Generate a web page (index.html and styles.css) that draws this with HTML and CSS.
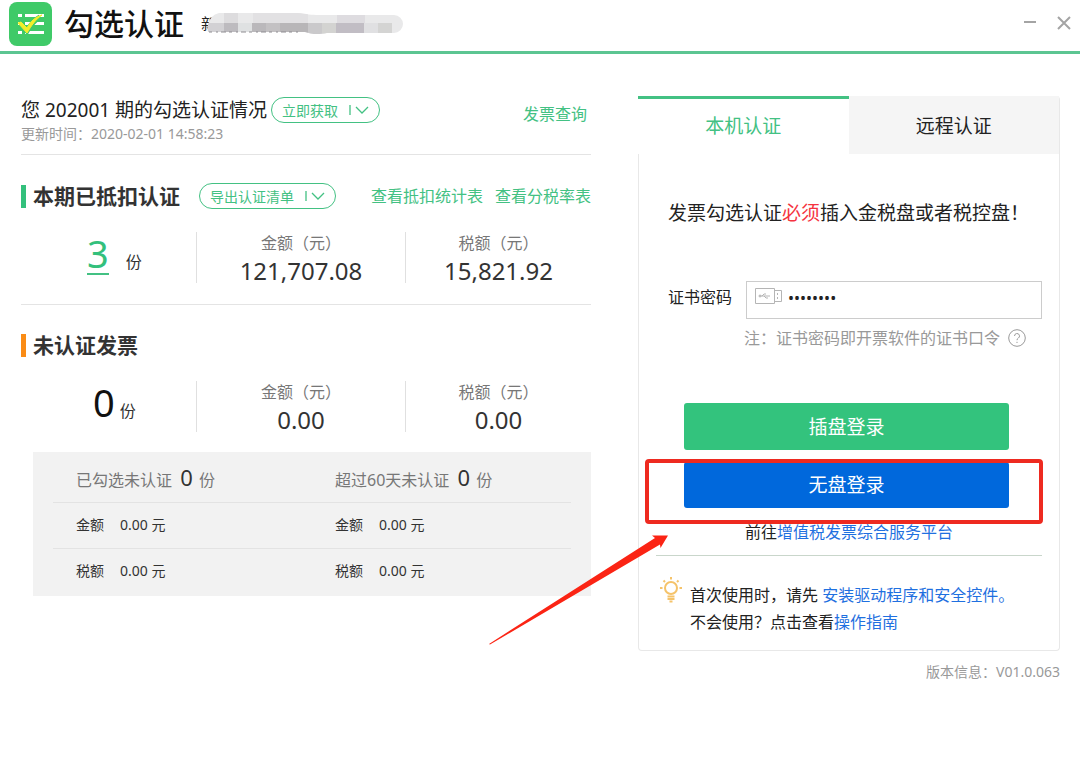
FILE: index.html
```html
<!DOCTYPE html>
<html lang="zh-CN">
<head>
<meta charset="utf-8">
<title>勾选认证</title>
<link rel="stylesheet" href="styles.css">
</head>
<body>
<header class="titlebar">
  <svg class="logo" viewBox="0 0 43 44" aria-hidden="true">
    <rect width="43" height="44" rx="8" fill="#3fca68"/>
    <g fill="#fff">
      <rect x="9" y="12" width="4" height="3"/><rect x="16" y="12" width="19" height="3"/>
      <rect x="9" y="20" width="4" height="3"/><rect x="16" y="20" width="19" height="3"/>
      <rect x="9" y="29" width="4" height="3"/><rect x="16" y="29" width="19" height="3"/>
    </g>
    <path d="M12 22l6 7C22 22 26 18 31 15" fill="none" stroke="#3fca68" stroke-width="5"/>
    <path d="M9 21l3-1 6 6C21 20 26 15 33 13 27 17 22 24 18 31z" fill="#f4ee2a" stroke="#f4ee2a"/>
  </svg>
  <h1 class="app-name">勾选认证</h1>
  <div class="company">
    <span class="company-text">新</span>
    <svg class="mosaic" viewBox="0 0 197 22" aria-hidden="true">
      <defs><clipPath id="strip"><path d="M12 0H90C100 1 104 2 112 2H187a9 9 0 0 1 0 18H120C110 22 104 21 98 19H2Q0 19 1 12 3 2 12 0z"/></clipPath></defs>
      <g clip-path="url(#strip)">
        <rect width="197" height="22" fill="#e9e9ea"/>
        <rect x="17" width="14" height="10" fill="#dddcde"/><rect x="46" width="55" height="10" fill="#e2e1e3"/>
        <rect x="130" width="28" height="10" fill="#dedce0"/>
        <rect y="10" width="17" height="12" fill="#d2d1d4"/><rect x="17" y="10" width="14" height="12" fill="#bdbbbf"/>
        <rect x="31" y="10" width="14" height="12" fill="#dfe1e2"/><rect x="45" y="10" width="14" height="12" fill="#bab8bb"/>
        <rect x="59" y="10" width="14" height="12" fill="#c3c1c3"/><rect x="73" y="10" width="28" height="12" fill="#b8b6b8"/>
        <rect x="101" y="10" width="14" height="12" fill="#cac9cb"/><rect x="115" y="10" width="14" height="12" fill="#d3d3d1"/>
        <rect x="129" y="10" width="28" height="12" fill="#c1bdc4"/><rect x="157" y="10" width="14" height="12" fill="#e0e0e2"/>
        <rect x="171" y="10" width="14" height="12" fill="#d4d4d3"/>
      </g>
      <path d="M2 19H91" stroke="#8f8d92" stroke-dasharray="3 4 2 3 5 3"/>
    </svg>
  </div>
  <div class="window-controls">
    <button type="button" class="window-button" aria-label="最小化"><svg viewBox="0 0 14 14"><path d="M1 5H13"/></svg></button>
    <button type="button" class="window-button" aria-label="关闭"><svg viewBox="0 0 14 14"><path d="M1 0L13 12M13 0L1 12"/></svg></button>
  </div>
</header>

<main class="layout">
  <div class="overview">
    <div class="period">
      <div>
        <div class="period-line">
          <h2 class="period-title">您 202001 期的勾选认证情况</h2>
          <button type="button" class="pill">立即获取<svg viewBox="0 0 20 12"><path d="M1 1V11M7 3l6 6 6-6"/></svg></button>
        </div>
        <p class="updated">更新时间：2020-02-01 14:58:23</p>
      </div>
      <a class="link-green" href="#">发票查询</a>
    </div>

    <section class="certified">
      <div class="section-head">
        <h3 class="section-title">本期已抵扣认证</h3>
        <button type="button" class="pill">导出认证清单<svg viewBox="0 0 20 12"><path d="M1 1V11M7 3l6 6 6-6"/></svg></button>
        <nav class="reports">
          <a class="link-green" href="#">查看抵扣统计表</a>
          <a class="link-green" href="#">查看分税率表</a>
        </nav>
      </div>
      <div class="stats">
        <div class="count count-wide"><a class="count-link" href="#">3</a><span>份</span></div>
        <div class="stat"><span class="stat-label">金额（元）</span><span class="stat-value">121,707.08</span></div>
        <div class="stat"><span class="stat-label">税额（元）</span><span class="stat-value">15,821.92</span></div>
      </div>
    </section>

    <section class="pending">
      <div class="section-head">
        <h3 class="section-title orange">未认证发票</h3>
      </div>
      <div class="stats">
        <div class="count"><span class="count-number">0</span><span>份</span></div>
        <div class="stat"><span class="stat-label">金额（元）</span><span class="stat-value">0.00</span></div>
        <div class="stat"><span class="stat-label">税额（元）</span><span class="stat-value">0.00</span></div>
      </div>
      <div class="breakdown">
        <div class="breakdown-row breakdown-head"><span>已勾选未认证 <b>0</b> 份</span><span>超过60天未认证 <b>0</b> 份</span></div>
        <div class="breakdown-row"><span><i>金额</i>0.00 元</span><span><i>金额</i>0.00 元</span></div>
        <div class="breakdown-row"><span><i>税额</i>0.00 元</span><span><i>税额</i>0.00 元</span></div>
      </div>
    </section>
  </div>

  <div class="side">
    <section class="card">
      <div class="tabs" role="tablist">
        <button type="button" class="tab active" role="tab" aria-selected="true">本机认证</button>
        <button type="button" class="tab" role="tab" aria-selected="false">远程认证</button>
      </div>
      <div class="card-body">
        <p class="notice">发票勾选认证<em>必须</em>插入金税盘或者税控盘！</p>
        <div class="field">
          <label for="cert-password">证书密码</label>
          <div class="password-box">
            <svg class="usb" viewBox="0 0 27 16" aria-hidden="true"><path d="M.5 .5H19.500V15.500H.5zM19.500 2.500H26.500V13.500H19.500M22.500 5V7M22.500 9V11M4 8H15M7 8l2-2h2M9 8l2 2h2"/><circle cx="5" cy="8" r="1"/></svg>
            <input type="password" id="cert-password" value="12345678">
          </div>
        </div>
        <p class="hint">注：证书密码即开票软件的证书口令<svg viewBox="0 0 18 18" aria-hidden="true"><circle cx="9" cy="9" r="8.300"/><path d="M6.500 7a2.500 2.500 0 1 1 3.700 2.200Q9 9.800 9 11.200M9 12.800V14"/></svg></p>
        <div class="action"><button type="button" class="login green">插盘登录</button></div>
        <div class="action action-marked">
          <button type="button" class="login blue">无盘登录</button>
          <div class="marker"></div>
          <svg class="arrow" viewBox="0 0 180 110" aria-hidden="true"><path d="M0 109L166 3 163 .5 179 .5 171.500 13 171 9.500 1 109.500z" fill="#fb2414"/></svg>
        </div>
        <p class="platform">前往<a href="#">增值税发票综合服务平台</a></p>
        <div class="tips">
          <svg class="bulb" viewBox="0 0 22 26" aria-hidden="true"><circle cx="11" cy="11" r="6"/><path d="M11 0V2.500M3.500 3.500L5 5M18.500 3.500L17 5M0 11H2.500M19.500 11H22M7.500 19.500H14.500M7.500 22H14.500M9.500 24.500H12.500"/></svg>
          <p>首次使用时，请先 <a href="#">安装驱动程序和安全控件。</a><br>不会使用？点击查看<a href="#">操作指南</a></p>
        </div>
      </div>
    </section>
    <p class="version">版本信息：V01.0.063</p>
  </div>
</main>
</body>
</html>
```
FILE: styles.css
```css
* { box-sizing: border-box; }

body {
  margin: 0;
  background: #fff;
  color: #333;
  font: 16px/24px "Noto Sans", "Noto Sans CJK SC", sans-serif;
}

h1, h2, h3, p { margin: 0; font-weight: 400; }
a { color: #1f70e0; text-decoration: none; }
button, input { font-family: inherit; }
button { cursor: pointer; }

/* Title bar */
.titlebar {
  display: flex;
  align-items: center;
  height: 54px;
  padding: 0 9px 4px 9px;
  border-bottom: 3px solid #5cc592;
}
.logo { width: 43px; height: 44px; }
.app-name {
  margin-left: 12px;
  color: #111;
  font-size: 30px;
  line-height: 44px;
  font-weight: 500;
}
.company { display: flex; align-items: center; margin-left: 17px; }
.company-text { color: #222; font-size: 16px; }
.mosaic { z-index: 1; width: 197px; height: 22px; margin-left: -10px; }
.window-controls { display: flex; gap: 20px; margin-left: auto; }
.window-button { width: 14px; height: 14px; padding: 0; border: 0; background: none; }
.window-button svg { display: block; overflow: visible; fill: none; stroke: #a4a4a4; stroke-width: 2; }

/* Page columns */
.layout {
  display: grid;
  grid-template-columns: minmax(0, 1fr) 422px;
  gap: 47px;
  padding: 42px 20px 0 21px;
}

/* Overview */
.period {
  display: flex;
  justify-content: space-between;
  padding: 0 4px 11px 0;
  border-bottom: 1px solid #e4e4e4;
}
.period > .link-green { margin-top: 6px; }
.period-line { display: flex; align-items: center; gap: 4px; }
.period-title { color: #222; font-size: 19px; line-height: 28px; }
.updated { color: #999; font-size: 14px; line-height: 19px; }
.link-green { color: #43c183; }

.pill {
  display: flex;
  align-items: center;
  gap: 11px;
  height: 26px;
  padding: 0 10px;
  border: 1px solid #43c183;
  border-radius: 13px;
  background: #fff;
  color: #43c183;
  font-size: 14px;
}
.pill svg { flex: none; width: 20px; height: 12px; fill: none; stroke: #43c183; stroke-width: 1.300; }

.certified { padding: 28px 0 21px; border-bottom: 1px solid #e4e4e4; }
.pending { padding-top: 27px; }
.section-head { display: flex; align-items: center; height: 26px; }
.section-title {
  margin-right: 19px;
  padding-left: 7px;
  border-left: 5px solid #33c07c;
  font-size: 21px;
  line-height: 23px;
  font-weight: 700;
}
.section-title.orange { border-color: #fa8c16; }
.reports { display: flex; gap: 12px; margin-left: auto; }

.stats {
  display: grid;
  grid-template-columns: 175px minmax(0, 209fr) minmax(0, 186fr);
  grid-auto-rows: 51px;
  margin-top: 23px;
}
.stat {
  display: flex;
  flex-direction: column;
  align-items: center;
  border-left: 1px solid #e0e0e0;
}
.stat-label { color: #777; line-height: 22px; }
.stat-value { font-size: 24px; line-height: 34px; }
.count {
  display: flex;
  align-items: baseline;
  justify-content: center;
  gap: 5px;
  padding-left: 12px;
  line-height: 42px;
}
.count-wide { gap: 17px; }
.count-link, .count-number { font-size: 38px; color: #111; }
.count-link { height: 43px; border-bottom: 2px solid #43c183; color: #33c07c; }

.breakdown {
  margin: 20px 0 0 12px;
  padding: 0 20px;
  background: #f2f2f2;
  font-size: 14px;
}
.breakdown-row {
  display: grid;
  grid-template-columns: 259px 1fr;
  height: 46px;
  padding-left: 23px;
  line-height: 43px;
}
.breakdown-row:last-child { height: 48px; }
.breakdown-row + .breakdown-row { border-top: 1px solid #e3e3e3; }
.breakdown-row i { margin-right: 16px; font-style: normal; }
.breakdown-head { height: 50px; color: #777; font-size: 16px; line-height: 51px; }
.breakdown-head b { margin: 0 2px 0 4px; color: #333; font-size: 22px; font-weight: 400; }

/* Login card */
.card { border: 1px solid #e8e8e8; border-top: 0; border-radius: 4px; }
.tabs { display: grid; grid-template-columns: 1fr 1fr; margin-left: -1px; }
.tab {
  height: 58px;
  padding: 0 0 3px;
  border: 0;
  border-top: 3px solid #f5f5f5;
  background: #f5f5f5;
  color: #222;
  font-size: 19px;
}
.tab.active { border-color: #43c183; background: #fff; color: #43c183; }
.card-body { padding: 45px 17px 14px; color: #222; }
.notice { padding-left: 12px; font-size: 19px; line-height: 28px; white-space: nowrap; }
.notice em { color: #f5333f; font-style: normal; }
.field { display: flex; gap: 14px; margin-top: 54px; padding-left: 12px; }
.field label { line-height: 32px; }
.password-box {
  display: flex;
  flex: 1;
  align-items: flex-start;
  height: 38px;
  padding: 6px 8px;
  border: 1px solid #ccc;
}
.usb { width: 27px; height: 16px; fill: none; stroke: #b5b5b5; }
.password-box input {
  flex: 1;
  min-width: 0;
  height: 20px;
  padding: 0 6px;
  border: 0;
  outline: 0;
  background: none;
  color: #222;
  font-size: 16px;
}
.hint {
  display: flex;
  align-items: center;
  gap: 8px;
  margin: 7px 0 53px 88px;
  color: #999;
  white-space: nowrap;
}
.hint svg { width: 18px; height: 18px; fill: none; stroke: #999; }
.action { padding: 0 33px 0 28px; }
.action-marked { position: relative; margin-top: 12px; }
.login {
  display: block;
  width: 100%;
  height: 47px;
  padding: 0 0 2px;
  border: 0;
  border-radius: 3px;
  color: #fff;
  font-size: 19px;
}
.login.green { background: #33c37d; }
.login.blue { height: 46px; background: #0068dc; }
.marker {
  position: absolute;
  inset: -3px -1px -16px -11px;
  border: 4px solid #ee2a20;
  border-radius: 4px;
  pointer-events: none;
}
.arrow {
  position: absolute;
  top: 73px;
  left: -167px;
  width: 180px;
  height: 110px;
  pointer-events: none;
}
.platform {
  padding: 12px 0 11px;
  border-bottom: 1px solid #c9d6cb;
  text-align: center;
}
.tips { display: flex; gap: 8px; padding: 21px 0 0 4px; line-height: 27px; white-space: nowrap; }
.tips p { padding-top: 5px; }
.bulb { width: 22px; height: 26px; fill: none; stroke: #f5c36a; stroke-width: 2; }
.version { margin-top: 11px; color: #999; font-size: 14px; line-height: 20px; text-align: right; }
```
